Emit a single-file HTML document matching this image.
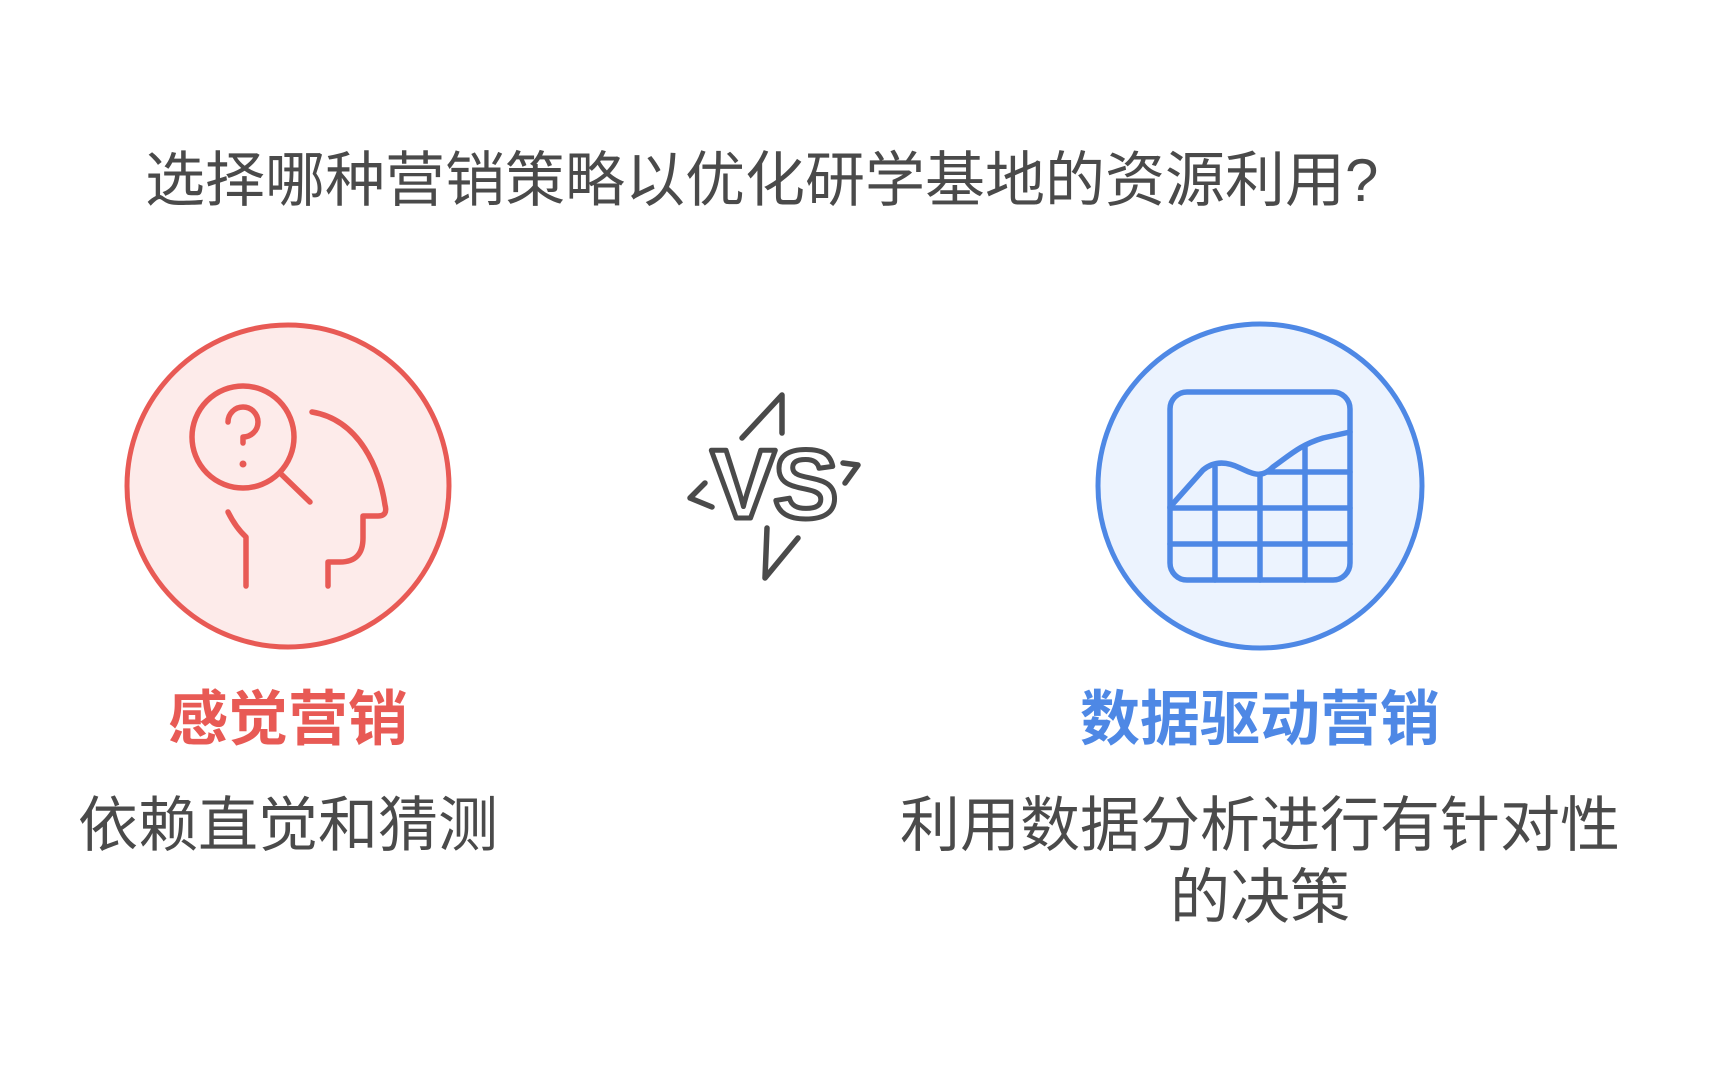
<!DOCTYPE html>
<html><head><meta charset="utf-8"><style>
html,body{margin:0;padding:0;background:#fff;}
body{width:1710px;height:1080px;position:relative;overflow:hidden;font-family:"Liberation Sans","Noto Sans CJK SC",sans-serif;color:#4a4a4a;}
.t{position:absolute;white-space:nowrap;line-height:1;}
</style></head><body>
<div class="t" style="left:145px;top:151px;font-size:60px;">选择哪种营销策略以优化研学基地的资源利用?</div>

<svg width="1710" height="1080" style="position:absolute;left:0;top:0" fill="none" stroke-linecap="round" stroke-linejoin="round">
  <circle cx="288" cy="486" r="161" fill="#FDEBEA" stroke="#E85A55" stroke-width="5"/>
  <g stroke="#E85A55" stroke-width="5.5">
    <circle cx="243" cy="437" r="51"/>
    <line x1="280" y1="473" x2="310" y2="502"/>
    <path d="M228 422 A15 15 0 1 1 243 437 V443"/>
    <path d="M312 412 C360 420 380 470 385 505 Q388 516 378 516 H363 V538 Q363 562 340 562 H328 V586"/>
    <path d="M228 512 Q236 528 246 537 V586"/>
  </g>
  <circle cx="243" cy="464" r="3.5" fill="#E85A55"/>

  <circle cx="1260" cy="486" r="162" fill="#ECF3FE" stroke="#4E88E5" stroke-width="5"/>
  <g stroke="#4E88E5" stroke-width="5.5">
    <rect x="1170" y="392" width="180" height="188" rx="17"/>
    <line x1="1170" y1="508" x2="1350" y2="508"/>
    <line x1="1170" y1="544" x2="1350" y2="544"/>
    <line x1="1268" y1="472" x2="1350" y2="472"/>
    <line x1="1215" y1="467" x2="1215" y2="580"/>
    <line x1="1260" y1="476" x2="1260" y2="580"/>
    <line x1="1305" y1="447" x2="1305" y2="580"/>
    <path d="M1170 507 L1203 470 C1215 460 1228 462 1240 468 C1255 475 1262 478 1273 467 C1290 455 1300 445 1323 438 L1350 432"/>
  </g>

  <g stroke="#4a4a4a" stroke-width="5.5">
    <path d="M742 438 L782 395 L782 433"/>
    <path d="M767 528 L765 578 L798 538"/>
    <path d="M705 483 L690 498 L712 507"/>
    <path d="M843 463 L858 465 L845 483"/>
  </g>
  <text x="773" y="518" text-anchor="middle" font-family="Liberation Sans, sans-serif" font-weight="bold" font-size="98" fill="#fff" stroke="#4a4a4a" stroke-width="5" stroke-linejoin="round" letter-spacing="-3">VS</text>
</svg>

<div class="t" style="left:88px;width:400px;text-align:center;top:690px;font-size:60px;font-weight:bold;color:#E85A55;">感觉营销</div>
<div class="t" style="left:78px;width:400px;text-align:center;top:796px;font-size:60px;">依赖直觉和猜测</div>

<div class="t" style="left:960px;width:600px;text-align:center;top:690px;font-size:60px;font-weight:bold;color:#4E88E5;">数据驱动营销</div>
<div class="t" style="left:860px;width:800px;text-align:center;top:790px;font-size:60px;line-height:72px;white-space:normal;">利用数据分析进行有针对性<br>的决策</div>
</body></html>
